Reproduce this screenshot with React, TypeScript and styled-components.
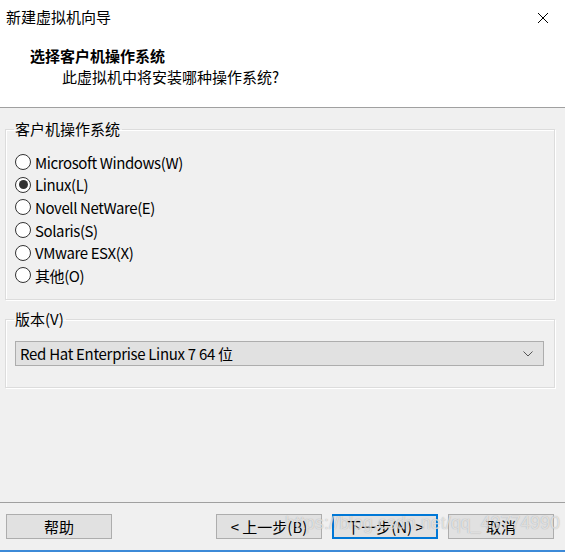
import React from "react";
import styled, { createGlobalStyle } from "styled-components";

const Global = createGlobalStyle`
  html, body { margin: 0; padding: 0; }
  body {
    background: #f0f0f0;
    font-family: "Noto Sans CJK SC", "Noto Sans", sans-serif;
    font-size: 15px;
    color: #000;
  }
  * { box-sizing: border-box; }
`;

const Window = styled.div`
  position: relative;
  width: 565px;
  height: 552px;
  display: flex;
  flex-direction: column;
  background: #f0f0f0;
  overflow: hidden;
`;

const Header = styled.div`
  background: #fff;
  height: 108px;
  border-bottom: 1px solid #a0a0a0;
  display: flex;
  flex-direction: column;
`;

const TitleBar = styled.div`
  height: 34px;
  display: flex;
  align-items: center;
  justify-content: space-between;
  padding: 0 16px 0 6px;
`;

const TitleText = styled.div`
  font-size: 15px;
  line-height: 20px;
`;

const CloseIcon = styled.svg`
  width: 12px;
  height: 12px;
  margin-top: 1px;
`;

const Heading = styled.div`
  font-weight: bold;
  font-size: 15px;
  line-height: 20px;
  margin: 12px 0 0 30px;
`;

const SubHeading = styled.div`
  font-size: 15px;
  line-height: 20px;
  margin: 1px 0 0 62px;
`;

const Body = styled.div`
  flex: 1;
  display: flex;
  flex-direction: column;
  padding: 12px 10px 0 5px;
  gap: 10px;
`;

const Group = styled.fieldset<{ $h: number }>`
  margin: 0;
  padding: 0 0 0 9px;
  height: ${(p) => p.$h}px;
  border: 1px solid #dcdcdc;
  box-shadow: 1px 1px 0 #fff, inset 1px 1px 0 #fff;
  display: flex;
  flex-direction: column;
  min-width: 0;
`;

const Legend = styled.legend`
  margin-left: -1px;
  padding: 0 2px 0 1px;
  font-size: 15px;
  line-height: 18px;
`;

const RadioList = styled.div`
  display: flex;
  flex-direction: column;
  padding-top: 13px;
`;

const RadioRow = styled.label`
  display: flex;
  align-items: center;
  height: 22.6px;
  gap: 4px;
  font-size: 15px;
  letter-spacing: -0.4px;
`;

const RadioCircle = styled.span<{ $checked: boolean }>`
  flex-shrink: 0;
  width: 16px;
  height: 16px;
  border-radius: 50%;
  border: 1px solid #333;
  background: #fff;
  display: flex;
  align-items: center;
  justify-content: center;
  &::after {
    content: "";
    display: ${(p) => (p.$checked ? "block" : "none")};
    width: 9px;
    height: 9px;
    border-radius: 50%;
    background: #333;
  }
`;

const Select = styled.div`
  margin: 13px 10px 0 0;
  height: 25px;
  background: #e1e1e1;
  border: 1px solid #adadad;
  display: flex;
  align-items: center;
  justify-content: space-between;
  padding: 0 10px 0 4px;
  font-size: 15px;
  letter-spacing: -0.3px;
`;

const Chevron = styled.svg`
  width: 10px;
  height: 6px;
`;

const Footer = styled.div`
  border-top: 1px solid #a0a0a0;
  margin-top: 1px;
  height: 50px;
  display: flex;
  align-items: flex-start;
  padding: 11px 11px 0 6px;
  border-bottom: 2px solid #3c8ad8;
`;

const Button = styled.button<{ $primary?: boolean }>`
  width: 106px;
  height: 25px;
  background: #e1e1e1;
  border: ${(p) => (p.$primary ? "2px solid #0078d7" : "1px solid #adadad")};
  font-family: "Noto Sans CJK SC", "Noto Sans", sans-serif;
  font-size: 15px;
  color: #000;
  padding: 0;
  display: flex;
  align-items: center;
  justify-content: center;
  flex-shrink: 0;
`;

const Spacer = styled.div`
  flex: 1;
`;

const ButtonGroup = styled.div`
  display: flex;
  gap: 10px;
`;

const Watermark = styled.div`
  position: absolute;
  left: 285px;
  top: 513px;
  font-family: "Liberation Sans", Arial, sans-serif;
  font-size: 17.5px;
  letter-spacing: 0.2px;
  color: rgba(255, 255, 255, 0.65);
  text-shadow: 0 0 1px rgba(110, 110, 110, 0.6);
  pointer-events: none;
  white-space: nowrap;
`;

const options = [
  "Microsoft Windows(W)",
  "Linux(L)",
  "Novell NetWare(E)",
  "Solaris(S)",
  "VMware ESX(X)",
  "其他(O)",
];

export default function App() {
  return (
    <>
      <Global />
      <Window>
        <Header>
          <TitleBar>
            <TitleText>新建虚拟机向导</TitleText>
            <CloseIcon viewBox="0 0 12 12">
              <path d="M1 1 L11 11 M11 1 L1 11" stroke="#000" strokeWidth="1" />
            </CloseIcon>
          </TitleBar>
          <Heading>选择客户机操作系统</Heading>
          <SubHeading>此虚拟机中将安装哪种操作系统?</SubHeading>
        </Header>
        <Body>
          <Group $h={180}>
            <Legend>客户机操作系统</Legend>
            <RadioList>
              {options.map((o, i) => (
                <RadioRow key={o}>
                  <RadioCircle $checked={i === 1} />
                  {o}
                </RadioRow>
              ))}
            </RadioList>
          </Group>
          <Group $h={78}>
            <Legend>版本(V)</Legend>
            <Select>
              <span>Red Hat Enterprise Linux 7 64 位</span>
              <Chevron viewBox="0 0 10 6">
                <path d="M0.5 0.5 L5 5 L9.5 0.5" fill="none" stroke="#555" strokeWidth="1" />
              </Chevron>
            </Select>
          </Group>
        </Body>
        <Footer>
          <Button>帮助</Button>
          <Spacer />
          <ButtonGroup>
            <Button>&lt; 上一步(B)</Button>
            <Button $primary>下一步(N) &gt;</Button>
            <Button>取消</Button>
          </ButtonGroup>
        </Footer>
        <Watermark>https://blog.csdn.net/qq_43774990</Watermark>
      </Window>
    </>
  );
}
